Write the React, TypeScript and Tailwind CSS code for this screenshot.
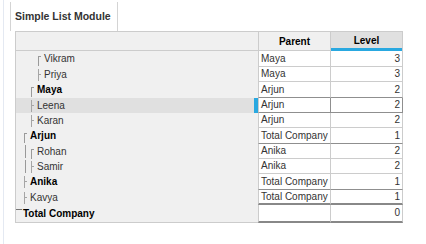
import React from 'react';

type Conn = 'first' | 'mid' | 'top';

interface Row {
  name: string;
  level: number;
  conn: Conn;
  bold?: boolean;
  bar?: boolean;
  parent: string;
  lv: number;
  h: string;
  sel?: boolean;
  edge?: 'dark' | 'thick' | 'selTop';
}

const rows: Row[] = [
  { name: 'Vikram', level: 3, conn: 'first', parent: 'Maya', lv: 3, h: 'h-[16px]' },
  { name: 'Priya', level: 3, conn: 'mid', parent: 'Maya', lv: 3, h: 'h-[15px]' },
  { name: 'Maya', level: 2, conn: 'first', bold: true, parent: 'Arjun', lv: 2, h: 'h-[16px]', edge: 'selTop' },
  { name: 'Leena', level: 2, conn: 'mid', parent: 'Arjun', lv: 2, h: 'h-[15px]', sel: true },
  { name: 'Karan', level: 2, conn: 'mid', parent: 'Arjun', lv: 2, h: 'h-[15px]' },
  { name: 'Arjun', level: 1, conn: 'first', bold: true, parent: 'Total Company', lv: 1, h: 'h-[16px]', edge: 'dark' },
  { name: 'Rohan', level: 2, conn: 'first', bar: true, parent: 'Anika', lv: 2, h: 'h-[15px]' },
  { name: 'Samir', level: 2, conn: 'mid', bar: true, parent: 'Anika', lv: 2, h: 'h-[15px]' },
  { name: 'Anika', level: 1, conn: 'mid', bold: true, parent: 'Total Company', lv: 1, h: 'h-[16px]', edge: 'dark' },
  { name: 'Kavya', level: 1, conn: 'mid', parent: 'Total Company', lv: 1, h: 'h-[15px]', edge: 'thick' },
  { name: 'Total Company', level: 0, conn: 'top', bold: true, parent: '', lv: 0, h: 'h-[18px]', edge: 'thick' },
];

const indent = ['pl-0', 'pl-[8px]', 'pl-[15px]', 'pl-[22px]'];

const Connector: React.FC<{ conn: Conn; bar?: boolean }> = ({ conn, bar }) => {
  if (conn === 'top') {
    return (
      <svg width="7" height="15" className="shrink-0 self-start">
        <line x1="0" y1="4.5" x2="6" y2="4.5" stroke="#777" strokeWidth="1" />
      </svg>
    );
  }
  return (
    <>
      {bar && (
        <svg width="7" height="15" className="shrink-0 self-start -ml-[7px]">
          <line x1="1.5" y1="1" x2="1.5" y2="14" stroke="#999" strokeWidth="1" />
        </svg>
      )}
      <svg width="6" height="15" className="shrink-0 self-start">
        {conn === 'first' ? (
          <>
            <line x1="0.5" y1="5" x2="0.5" y2="15" stroke="#9a9a9a" strokeWidth="1" />
            <line x1="0" y1="5.5" x2="3" y2="5.5" stroke="#9a9a9a" strokeWidth="1" />
          </>
        ) : (
          <>
            <line x1="0.5" y1="2" x2="0.5" y2="14" stroke="#a5a5a5" strokeWidth="1" />
            <line x1="0" y1="7.5" x2="3" y2="7.5" stroke="#a5a5a5" strokeWidth="1" />
          </>
        )}
      </svg>
    </>
  );
};

const App: React.FC = () => {
  return (
    <div className="w-[426px] h-[244px] bg-white font-['Liberation_Sans',Arial,sans-serif] text-[10px] text-[#333] overflow-hidden">
      <div className="ml-[3px] h-full border-l border-[#e4e9f2] pl-[6px]">
        <div className="pt-[2px] flex">
          <div className="w-[108px] h-[29px] border-l border-r border-[#d4d4d4] flex items-center pl-[4px] font-bold text-[10.5px] text-[#333]">
            Simple List Module
          </div>
        </div>

        <div className="ml-[5px] flex flex-col">
          {/* header */}
          <div className="flex h-[20px]">
            <div className="w-[243px] bg-[#f0f0f0] border-l border-t border-b border-[#cccccc]" />
            <div className="w-[72px] bg-[#f0f0f0] border-l border-t border-b border-[#cccccc] flex items-center justify-center font-bold text-black">
              Parent
            </div>
            <div className="w-[73px] bg-[#e0e0e0] border-l border-t border-r border-[#cccccc] flex flex-col">
              <div className="flex-1 flex items-center justify-center font-bold text-black">Level</div>
              <div className="h-[3px] bg-[#29a8e0]" />
            </div>
          </div>

          {rows.map((r) => {
            const dark = r.edge === 'dark' || r.edge === 'selTop' || r.sel;
            const bottom =
              r.edge === 'thick'
                ? 'border-b-2 border-b-[#888]'
                : dark
                ? 'border-b border-b-[#8f8f8f]'
                : 'border-b border-b-[#cccccc]';
            return (
              <div key={r.name} className={`flex ${r.h}`}>
                <div
                  className={`w-[243px] border-l border-[#cccccc] flex ${
                    r.sel ? 'bg-[#e0e0e0]' : 'bg-[#f0f0f0]'
                  } ${r.level === 0 ? 'border-b' : ''}`}
                >
                  <div className={`flex-1 flex items-center ${indent[r.level]}`}>
                    <Connector conn={r.conn} bar={r.bar} />
                    <span className={`${r.bold ? 'font-bold text-black' : 'text-[#333]'} leading-none`}>
                      {r.name}
                    </span>
                  </div>
                  {r.sel && <div className="w-[4px] bg-[#29a8e0]" />}
                </div>
                <div className={`w-[72px] bg-white border-l border-l-[#cccccc] ${bottom} flex items-center pl-[2px] leading-none whitespace-nowrap overflow-hidden`}>
                  {r.parent}
                </div>
                <div
                  className={`w-[73px] bg-white border-l border-r ${
                    r.sel ? 'border-l-[#8f8f8f] border-r-[#8f8f8f]' : 'border-l-[#cccccc] border-r-[#cccccc]'
                  } ${bottom} flex items-center justify-end pr-[2px] leading-none`}
                >
                  {r.lv}
                </div>
              </div>
            );
          })}
        </div>
      </div>
    </div>
  );
};

export default App;
